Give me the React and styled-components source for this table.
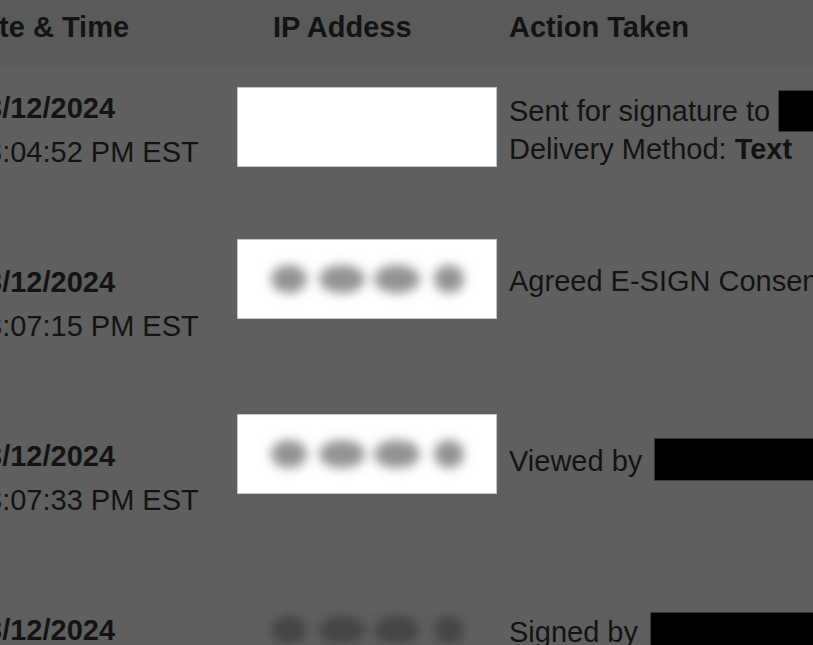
import React from 'react'
import styled, { createGlobalStyle } from 'styled-components';

const GlobalStyle = createGlobalStyle`
  html, body {
    margin: 0;
    padding: 0;
    background: #5f5f5f;
    overflow: hidden;
  }
  body {
    width: 813px;
    height: 645px;
    font-family: "Liberation Sans", Arial, sans-serif;
    color: #131313;
  }
`;

const Page = styled.div`
  width: 813px;
  height: 645px;
  overflow: hidden;
  background: #5f5f5f;
`;

const Table = styled.div`
  margin-left: -14px;
  width: 900px;
`;

const HeadRow = styled.div`
  display: grid;
  grid-template-columns: 251px 272px 1fr;
  height: 65px;
  box-sizing: border-box;
  padding-top: 10px;
  background: #595a5a;
`;

const HeadCell = styled.div`
  font-size: 29px;
  line-height: 34px;
  font-weight: 700;
  white-space: nowrap;
  margin-left: ${(p) => p.shift || 0}px;
`;

const Row = styled.div`
  display: grid;
  grid-template-columns: 251px 272px 1fr;
  align-items: start;
  height: 174px;
  box-sizing: border-box;
  padding-top: 21px;
`;

const DateCell = styled.div`
  font-size: 29px;
  line-height: 44px;
  white-space: nowrap;
`;

const DateLine = styled.div`
  font-weight: 700;
`;

const IpCell = styled.div`
  align-self: start;
  margin-top: ${(p) => p.offset - 21}px;
`;

const IpBox = styled.div`
  width: 260px;
  height: 80px;
  box-sizing: border-box;
  background: ${(p) => (p.plain ? 'transparent' : '#ffffff')};
  border: 1px solid ${(p) => (p.plain ? 'transparent' : '#c4c4c4')};
  display: flex;
  align-items: center;
  justify-content: center;
`;

const ActionCell = styled.div`
  font-size: 29px;
  line-height: 35px;
  white-space: nowrap;
  padding-top: 4px;
`;

const Redacted = styled.span`
  display: inline-block;
  width: 200px;
  height: ${(p) => p.h || 43}px;
  margin-left: ${(p) => p.gap || 0}px;
  background: #000;
  border: 1px solid #3a3a3a;
  box-sizing: border-box;
  vertical-align: ${(p) => p.drop || -10}px;
`;

const Strong = styled.b`
  font-weight: 700;
`;

const blobs = [
  { cx: 51, rx: 18 },
  { cx: 104, rx: 23 },
  { cx: 159, rx: 23 },
  { cx: 211, rx: 15 },
];

const BlurredIp = ({ id, color }) => (
  <svg width="258" height="78" viewBox="0 0 258 78">
    <defs>
      <filter id={id} x="-50%" y="-50%" width="200%" height="200%">
        <feGaussianBlur stdDeviation="5.5" />
      </filter>
    </defs>
    <g filter={`url(#${id})`}>
      {blobs.map((b) => (
        <ellipse key={b.cx} cx={b.cx} cy="39" rx={b.rx} ry="14" fill={color} />
      ))}
    </g>
  </svg>
);

const rows = [
  {
    date: '3/12/2024',
    time: '3:04:52 PM EST',
    offset: 22,
    ip: null,
    action: (
      <>
        Sent for signature to <Redacted h={42} drop={-11} />
        <br />
        Delivery Method: <Strong>Text</Strong>
      </>
    ),
  },
  {
    date: '3/12/2024',
    time: '3:07:15 PM EST',
    offset: 0,
    ip: 'light',
    action: <>Agreed E-SIGN Consent</>,
  },
  {
    date: '3/12/2024',
    time: '3:07:33 PM EST',
    offset: 1,
    ip: 'light',
    action: (
      <>
        Viewed by <Redacted gap={4} drop={-10} />
      </>
    ),
  },
  {
    date: '3/12/2024',
    time: '3:08:02 PM EST',
    offset: 3,
    ip: 'dark',
    action: (
      <>
        Signed by <Redacted gap={4} h={60} drop={-30} />
      </>
    ),
  },
];

const App = () => {
  return (
    <Page>
      <GlobalStyle />
      <Table>
        <HeadRow>
          <HeadCell shift={-24}>Date &amp; Time</HeadCell>
          <HeadCell shift={36}>IP Addess</HeadCell>
          <HeadCell>Action Taken</HeadCell>
        </HeadRow>
        {rows.map((r, i) => (
          <Row key={i}>
            <DateCell>
              <DateLine>{r.date}</DateLine>
              <div>{r.time}</div>
            </DateCell>
            <IpCell offset={r.offset}>
              <IpBox plain={r.ip === 'dark'}>
                {r.ip && (
                  <BlurredIp
                    id={`blur${i}`}
                    color={r.ip === 'dark' ? '#444444' : '#939393'}
                  />
                )}
              </IpBox>
            </IpCell>
            <ActionCell>{r.action}</ActionCell>
          </Row>
        ))}
      </Table>
    </Page>
  )
}

export default App;
